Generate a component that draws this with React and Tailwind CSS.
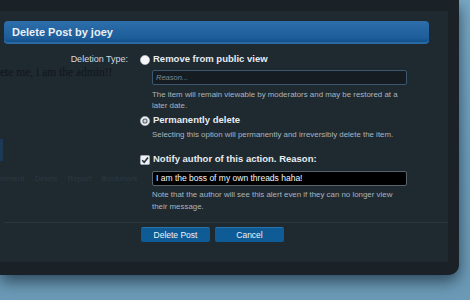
import React from "react";

const font = { fontFamily: '"Liberation Sans", Arial, sans-serif' };

function RadioOff() {
  return (
    <svg width="10" height="10" viewBox="0 0 10 10">
      <circle cx="5" cy="5" r="4.6" fill="#f4f6f8" stroke="#c9d0d6" strokeWidth="0.6" />
    </svg>
  );
}
function RadioOn() {
  return (
    <svg width="10" height="10" viewBox="0 0 10 10">
      <circle cx="5" cy="5" r="4.6" fill="#e9edf0" stroke="#b8c0c7" strokeWidth="0.6" />
      <circle cx="5" cy="5" r="2.6" fill="#5f6a73" />
      <circle cx="5" cy="5" r="1.5" fill="#cfd5da" />
    </svg>
  );
}
function Check() {
  return (
    <svg width="10" height="10" viewBox="0 0 10 10">
      <rect x="0.5" y="0.5" width="9" height="9" rx="1" fill="#eef1f3" stroke="#b8c0c7" strokeWidth="0.6" />
      <path d="M2.2 5.2 L4.2 7.2 L8 2.6" fill="none" stroke="#2b3238" strokeWidth="1.6" />
    </svg>
  );
}

export default function App() {
  return (
    <div className="relative w-[470px] h-[300px] overflow-hidden bg-gradient-to-b from-[#7aa9c6] via-[#6f9fbd] to-[#6c9ab6]" style={font}>
      <div className="w-[459px] h-[275px] bg-[#1a2127] rounded-br-[10px] shadow-[0_6px_16px_rgba(20,40,55,0.75)] pt-[11px]">
        <div className="relative w-[448px] h-[251px] bg-[#1f2930] pt-[10px]">
          {/* ghosted page behind the overlay */}
          <div className="absolute left-[0px] top-[53px] text-[11.5px] text-[#10161b] whitespace-nowrap" style={{ fontFamily: '"Liberation Serif", serif' }}>
            ete me, i am the admin!!
          </div>
          <div className="absolute left-[0px] top-[128px] w-[3px] h-[22px] bg-[#1c3a55]" />
          <div className="absolute left-[0px] top-[162px] flex gap-[10px] text-[8px] text-[#2c3842] whitespace-nowrap">
            <span>mment</span>
            <span>Delete</span>
            <span>Report</span>
            <span>Bookmark</span>
          </div>

          <div className="relative ml-[4px] w-[425px] h-[23px] rounded-[4px] bg-gradient-to-b from-[#2d6fab] via-[#1d5d99] via-75% to-[#0a4782] flex items-center pl-[8px] shadow-[inset_0_-2px_0_#2a6aa3]">
            <span className="text-[11px] font-bold text-[#eaf0f5]">Delete Post by joey</span>
          </div>

          <div className="relative mt-[10px] flex">
            <div className="w-[128px] text-right text-[9px] leading-[11px] text-[#d3dbe2]">Deletion Type:</div>
            <div className="ml-[12px] w-[268px]">
              <div className="flex items-center gap-[3px] h-[11px]">
                <RadioOff />
                <span className="text-[9.5px] font-bold text-[#e7ecf0]">Remove from public view</span>
              </div>
              <div className="ml-[12px] mt-[5px] h-[15px] w-[255px] rounded-[2px] border border-[#3b5870] bg-[#151c22] flex items-center pl-[3px]">
                <span className="text-[7.5px] italic text-[#7f8b95]">Reason...</span>
              </div>
              <div className="ml-[12px] mt-[4px] text-[7.9px] leading-[11px] text-[#a9b5bf] w-[248px]">
                The item will remain viewable by moderators and may be restored at a later date.
              </div>
              <div className="flex items-center gap-[3px] h-[11px] mt-[4px]">
                <RadioOn />
                <span className="text-[9.5px] font-bold text-[#e7ecf0]">Permanently delete</span>
              </div>
              <div className="ml-[12px] mt-[3px] text-[7.9px] leading-[11px] text-[#a9b5bf] whitespace-nowrap">
                Selecting this option will permanently and irreversibly delete the item.
              </div>
              <div className="flex items-center gap-[3px] h-[11px] mt-[14px]">
                <Check />
                <span className="text-[9.5px] font-bold text-[#e7ecf0]">Notify author of this action. Reason:</span>
              </div>
              <div className="ml-[12px] mt-[6px] h-[15px] w-[255px] rounded-[2px] border border-[#59646d] bg-[#000000] flex items-center pl-[3px]">
                <span className="text-[8.5px] text-[#f4f6f8]">I am the boss of my own threads haha!</span>
              </div>
              <div className="ml-[12px] mt-[3px] text-[7.9px] leading-[12px] text-[#a9b5bf] w-[255px]">
                Note that the author will see this alert even if they can no longer view their message.
              </div>
            </div>
          </div>

          <div className="relative ml-[4px] mt-[9px] h-px w-[444px] bg-[#2a353e]" />

          <div className="relative mt-[4px] ml-[141px] flex gap-[5px]">
            <div className="w-[69px] h-[15px] rounded-[2px] bg-[#0f5b96] border-t border-[#2b73ac] flex items-center justify-center text-[8.5px] text-[#eef3f7]">Delete Post</div>
            <div className="w-[69px] h-[15px] rounded-[2px] bg-[#0f5b96] border-t border-[#2b73ac] flex items-center justify-center text-[8.5px] text-[#eef3f7]">Cancel</div>
          </div>
        </div>
      </div>
    </div>
  );
}
